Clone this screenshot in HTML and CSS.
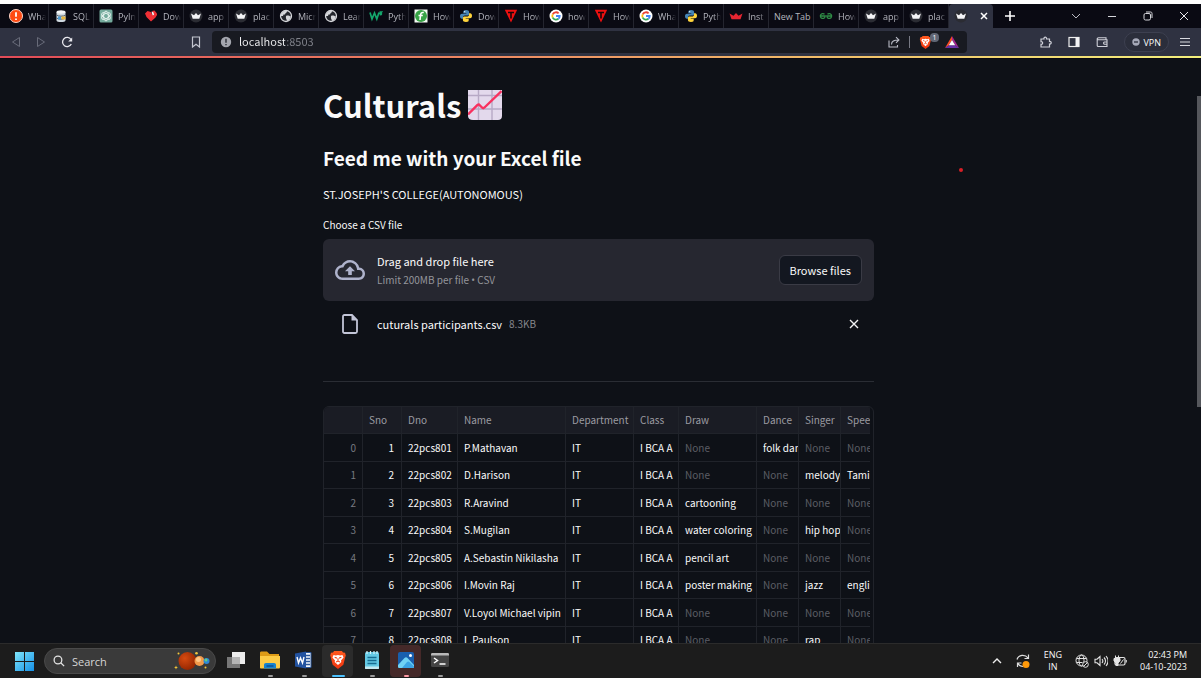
FILE: index.html
```
<!DOCTYPE html>
<html lang="en">
<head>
<meta charset="utf-8">
<title>Culturals</title>
<link rel="stylesheet" href="styles.css">
</head>
<body>
<svg class="defs" aria-hidden="true">
  <defs>
    <linearGradient id="gw" x1="0" y1="0" x2="1" y2="1"><stop offset="0" stop-color="#7fe6fb"/><stop offset="1" stop-color="#1590e6"/></linearGradient>
    <linearGradient id="gb" x1="0" y1="0" x2="0" y2="1"><stop offset="0" stop-color="#ff5a1f"/><stop offset="1" stop-color="#f0340f"/></linearGradient>
    <radialGradient id="gm" cx=".35" cy=".35" r=".75"><stop offset="0" stop-color="#d64a10"/><stop offset="1" stop-color="#8e2300"/></radialGradient>
  </defs>
  <symbol id="alert" viewBox="0 0 14 14"><circle cx="7" cy="7" r="6.5" fill="#ff4a12" stroke="#ffd9cc"/><path d="M7 3.2v4.6M7 9.4v1.6" stroke="#fff" stroke-width="1.8"/></symbol>
  <symbol id="sql" viewBox="0 0 14 14"><path d="M2.500 3v8.500c0 2 9 2 9 0V3z" fill="#cfd8df"/><ellipse cx="7" cy="3" rx="4.500" ry="1.700" fill="#f3f5f6"/><path d="M2.500 6c2 1.600 7 1.600 9 0M2.500 9c2 1.600 7 1.600 9 0" stroke="#555f6b" fill="none"/><path d="M7.500 7.500h4v3h-4z" fill="#e9b63c"/><path d="M4 7.500h3v3H4z" fill="#4c9bd6"/></symbol>
  <symbol id="gpt" viewBox="0 0 14 14"><rect x=".5" y=".5" width="13" height="13" rx="1.500" fill="#74aa9c"/><g fill="none" stroke="#e8f4f0" stroke-width=".9"><ellipse cx="7" cy="7" rx="2.400" ry="4.800"/><ellipse cx="7" cy="7" rx="2.400" ry="4.800" transform="rotate(60 7 7)"/><ellipse cx="7" cy="7" rx="2.400" ry="4.800" transform="rotate(120 7 7)"/></g></symbol>
  <symbol id="heart" viewBox="0 0 14 14"><path d="M1 4.500 3.500 2 7 3l1.500 3h4.500L11.500 8.500 7 12.500 2.500 8z" fill="#ef2f35"/><path d="M8 2l2.500-.5L13 4.500V6H9.500z" fill="#ef2f35"/><path d="M7.500 2.500l2 1 .5 2.500-1.500.3z" fill="#fff"/></symbol>
  <symbol id="crown" viewBox="0 0 14 14"><circle cx="7" cy="7" r="6.500" fill="#2b2c33"/><path d="M2 4.500l3 1.700L7 4l2 2.200 3-1.700-1.700 5.200H3.700z" fill="#f4f4f6"/></symbol>
  <symbol id="globe" viewBox="0 0 14 14"><circle cx="7" cy="7" r="5.500" fill="#24262d" stroke="#d5d6da" stroke-width="1.300"/><path d="M2 5c2-3 4-3.500 6-3 0 2-2 2-2 3.500H4.500L4 7H2zM7 7c2-1 3 0 5 .5-1 3-2.500 4.500-4 4.500 0-1.500-1.500-2-1-5z" fill="#d5d6da"/></symbol>
  <symbol id="w3" viewBox="0 0 14 14"><path d="M1 3.500l2 6.500L5.500 4l2.300 6L10 3.500M10.500 3h2l-1 1.200c1.400 0 1.200 1.800-.8 1.300" fill="none" stroke="#14a66c" stroke-width="1.700"/></symbol>
  <symbol id="fgreen" viewBox="0 0 14 14"><path d="M.5.500h13v13H.5z" fill="#f4fbf4"/><circle cx="7" cy="7" r="6" fill="#38a447"/><path d="M9.800 3.600C7.500 3 6.700 4.500 6.500 6.500L6 11M4.500 6.500h4.300" fill="none" stroke="#fff" stroke-width="1.600"/></symbol>
  <symbol id="python" viewBox="0 0 14 14"><path d="M7 1C4.500 1 4.300 2 4.300 3v1.200h3v.6H3C1.500 4.800 1 6 1 7.300c0 1.500.7 2.400 1.800 2.400H4V8.300c0-1 .8-1.800 1.900-1.800h2.800c.8 0 1.400-.7 1.400-1.500V3c0-1.200-1-2-3.100-2z" fill="#4584b6"/><path d="M7 13c2.500 0 2.700-1 2.700-2V9.800h-3v-.6H11c1.500 0 2-1.200 2-2.500 0-1.500-.7-2.400-1.800-2.400H10v1.400c0 1-.8 1.800-1.900 1.800H5.300c-.8 0-1.400.7-1.400 1.500v2c0 1.200 1 2 3.100 2z" fill="#ffd43b"/><circle cx="5.700" cy="2.700" r=".6" fill="#fff"/></symbol>
  <symbol id="tri" viewBox="0 0 14 14"><path d="M.8.8h12.400L7 13.500z" fill="#ed1010"/><path d="M4 3.500h6M7 3.500v6" stroke="#180609" stroke-width="1.600"/></symbol>
  <symbol id="google" viewBox="0 0 14 14"><circle cx="7" cy="7" r="6.500" fill="#fff"/><g fill="none" stroke-width="1.800"><path d="M9.600 4.300A3.700 3.700 0 0 0 3.700 5.300" stroke="#ea4335"/><path d="M3.700 5.300a3.700 3.700 0 0 0 0 3.400" stroke="#fbbc05"/><path d="M3.700 8.700a3.700 3.700 0 0 0 5.700 1.100" stroke="#34a853"/><path d="M9.400 9.800A3.700 3.700 0 0 0 10.700 7H7" stroke="#4285f4"/></g></symbol>
  <symbol id="redcrown" viewBox="0 0 14 14"><path d="M.5 4.500l4 2.200L7 4l2.500 2.700 4-2.200-2 5.700h-9z" fill="#e52531"/></symbol>
  <symbol id="gfg" viewBox="0 0 14 14"><path d="M5.500 5.300A2.400 2.400 0 1 0 6.200 7H1M8.500 5.300A2.400 2.400 0 1 1 7.800 7H13" fill="none" stroke="#2f8d46" stroke-width="1.300"/></symbol>
  <symbol id="shield" viewBox="0 0 16 18"><path d="M4.500 1h7l1 1.200 1.800.2L15 5l-.5 1.500-1.700 6.700L8 17l-4.800-3.800L1.500 6.500 1 5l.7-2.600 1.800-.2z" fill="url(#gb)"/><path d="M4 4.500l2 .4 2-.4 2 .4 2-.4L13 6.800 10.700 9.500l.3 1.200-3 2.800-3-2.800.3-1.200L3 6.800z" fill="#fff"/><path d="M5 6.500l2 .8M11 6.500l-2 .8M8 7.500v2M6.300 10.800 8 10l1.700.8" fill="none" stroke="#f2461a"/></symbol>
</svg>

<div class="window">
  <header class="chrome">
    <nav class="tabs" aria-label="Open tabs">
      <a class="tab" href="#"><svg class="fav"><use href="#alert"/></svg><span class="tab-text">Wha</span></a>
      <a class="tab" href="#"><svg class="fav"><use href="#sql"/></svg><span class="tab-text">SQL</span></a>
      <a class="tab" href="#"><svg class="fav"><use href="#gpt"/></svg><span class="tab-text">PyIn</span></a>
      <a class="tab" href="#"><svg class="fav"><use href="#heart"/></svg><span class="tab-text">Dow</span></a>
      <a class="tab" href="#"><svg class="fav"><use href="#crown"/></svg><span class="tab-text">app</span></a>
      <a class="tab" href="#"><svg class="fav"><use href="#crown"/></svg><span class="tab-text">plac</span></a>
      <a class="tab" href="#"><svg class="fav"><use href="#globe"/></svg><span class="tab-text">Micr</span></a>
      <a class="tab" href="#"><svg class="fav"><use href="#globe"/></svg><span class="tab-text">Lear</span></a>
      <a class="tab" href="#"><svg class="fav"><use href="#w3"/></svg><span class="tab-text">Pyth</span></a>
      <a class="tab" href="#"><svg class="fav"><use href="#fgreen"/></svg><span class="tab-text">How</span></a>
      <a class="tab" href="#"><svg class="fav"><use href="#python"/></svg><span class="tab-text">Dow</span></a>
      <a class="tab" href="#"><svg class="fav"><use href="#tri"/></svg><span class="tab-text">How</span></a>
      <a class="tab" href="#"><svg class="fav"><use href="#google"/></svg><span class="tab-text">how</span></a>
      <a class="tab" href="#"><svg class="fav"><use href="#tri"/></svg><span class="tab-text">How</span></a>
      <a class="tab" href="#"><svg class="fav"><use href="#google"/></svg><span class="tab-text">Wha</span></a>
      <a class="tab" href="#"><svg class="fav"><use href="#python"/></svg><span class="tab-text">Pyth</span></a>
      <a class="tab" href="#"><svg class="fav"><use href="#redcrown"/></svg><span class="tab-text">Inst</span></a>
      <a class="tab" href="#"><span class="tab-text tab-wide">New Tab</span></a>
      <a class="tab" href="#"><svg class="fav"><use href="#gfg"/></svg><span class="tab-text">How</span></a>
      <a class="tab" href="#"><svg class="fav"><use href="#crown"/></svg><span class="tab-text">app</span></a>
      <a class="tab" href="#"><svg class="fav"><use href="#crown"/></svg><span class="tab-text">plac</span></a>
      <div class="tab tab-active"><svg class="fav"><use href="#crown"/></svg><button class="icon-btn" aria-label="Close tab"><svg width="8" height="8" viewBox="0 0 8 8"><path d="M1 1l6 6M7 1L1 7" stroke="#fff" stroke-width="1.500"/></svg></button></div>
      <button class="icon-btn new-tab" aria-label="New tab"><svg width="10" height="10" viewBox="0 0 10 10"><path d="M5 0v10M0 5h10" stroke="#fff" stroke-width="1.600"/></svg></button>
      <div class="win-buttons">
        <button class="icon-btn" aria-label="Search tabs"><svg width="10" height="10" viewBox="0 0 10 10"><path d="M1 3l4 4 4-4" fill="none" stroke="#b9bac2"/></svg></button>
        <button class="icon-btn" aria-label="Minimize"><svg width="10" height="10" viewBox="0 0 10 10"><path d="M1 5.500h8" stroke="#d5d6db"/></svg></button>
        <button class="icon-btn" aria-label="Restore"><svg width="10" height="10" viewBox="0 0 10 10"><rect x="1" y="2.500" width="6.500" height="6.500" rx="1.500" fill="none" stroke="#d5d6db"/><path d="M3 1h4.500C8.500 1 9 1.500 9 2.500V7" fill="none" stroke="#d5d6db"/></svg></button>
        <button class="icon-btn" aria-label="Close"><svg width="10" height="10" viewBox="0 0 10 10"><path d="M1 1l8 8M9 1L1 9" stroke="#e6e6ea"/></svg></button>
      </div>
    </nav>
    <div class="toolbar">
      <div class="nav-buttons">
        <button class="icon-btn" aria-label="Back"><svg width="10" height="12" viewBox="0 0 10 12"><path d="M8.500 1.500v9L1.500 6z" fill="none" stroke="#686b79"/></svg></button>
        <button class="icon-btn" aria-label="Forward"><svg width="10" height="12" viewBox="0 0 10 12"><path d="M1.500 1.500v9L8.500 6z" fill="none" stroke="#686b79"/></svg></button>
        <button class="icon-btn" aria-label="Reload"><svg width="12" height="12" viewBox="0 0 12 12"><path d="M10.300 8A4.600 4.600 0 1 1 10 3.500" fill="none" stroke="#e9e9ee" stroke-width="1.300"/><path d="M11.200 1.500v4H7.200z" fill="#e9e9ee"/></svg></button>
      </div>
      <button class="icon-btn bookmark" aria-label="Bookmark"><svg width="10" height="12" viewBox="0 0 10 12"><path d="M1.500 1h7v10L5 8.200 1.500 11z" fill="none" stroke="#c4c6d0" stroke-width="1.200"/></svg></button>
      <div class="address">
        <svg width="12" height="12" viewBox="0 0 12 12"><circle cx="6" cy="6" r="5.200" fill="#a4a6ae"/><path d="M6 2.800v4M6 8v1.300" stroke="#2a2d35" stroke-width="1.400"/></svg>
        <input class="url" type="text" aria-label="Address" value="localhost:8503">
        <button class="icon-btn" aria-label="Share"><svg width="12" height="12" viewBox="0 0 12 12"><path d="M1 4.500V11h8.500V9M3.500 8.500C3.500 5 6 4 10.500 4M8 1.200 10.900 4 8 6.800" fill="none" stroke="#b9bbc5" stroke-width="1.100"/></svg></button>
        <span class="divider"></span>
        <button class="icon-btn shield-btn" aria-label="Brave Shields"><svg width="13" height="15"><use href="#shield"/></svg><span class="badge">1</span></button>
        <button class="icon-btn" aria-label="Rewards"><svg width="14" height="12" viewBox="0 0 14 12"><path d="M7 0v4L3.800 9.300 0 12z" fill="#ff4b24"/><path d="M7 0l7 12-3.800-2.700L7 4z" fill="#a3278f"/><path d="M0 12l3.800-2.700h6.400L14 12z" fill="#6a32a8"/><path d="M7 4l3.200 5.300H3.800z" fill="#fff"/></svg></button>
      </div>
      <div class="tools">
        <button class="icon-btn" aria-label="Extensions"><svg width="12" height="12" viewBox="0 0 12 12"><path d="M1 3h3c-.6-2.400 3-2.400 2.500 0H9.500v2.500c2.300-.5 2.300 3 0 2.500v3H1V8.300c2.200.4 2.200-3 0-2.600z" fill="none" stroke="#cfd0d8" stroke-width="1.200"/></svg></button>
        <button class="icon-btn" aria-label="Sidebar"><svg width="12" height="12" viewBox="0 0 12 12"><rect x="1" y="1.500" width="10" height="9" fill="none" stroke="#eee" stroke-width="1.200"/><path d="M7.500 1.500H11v9H7.500z" fill="#f3f3f5"/></svg></button>
        <button class="icon-btn" aria-label="Wallet"><svg width="12" height="12" viewBox="0 0 12 12"><path d="M10 3.500V1.800H2.500C.8 1.800.8 3.800 2.500 3.800H11v6.700H2.200c-.7 0-1-.4-1-1V2.800M11 6H8.300c-1 0-1 2.200 0 2.200H11" fill="none" stroke="#cfd0d8" stroke-width="1.100"/></svg></button>
        <button class="vpn"><svg width="8" height="8" viewBox="0 0 8 8"><circle cx="4" cy="4" r="3.700" fill="#a6a9b8"/><path d="M2 4h4" stroke="#2b2e3b" stroke-width="1.300"/></svg>VPN</button>
        <button class="icon-btn" aria-label="Menu"><svg width="12" height="10" viewBox="0 0 12 10"><path d="M1 1.500h10M1 5h10M1 8.500h10" stroke="#d9dae0"/></svg></button>
      </div>
    </div>
    <div class="accent"></div>
  </header>

  <main class="page">
    <div class="content">
      <h1 class="title">Culturals
        <svg class="chart" viewBox="0 0 34 30"><path d="M0 0h34v26c0 2.500-1.500 4-4 4H5c-3 0-5-1.500-5-4z" fill="#e3d9ec"/><path d="M0 5.500h34M0 19h34M10.500 0v30M24 0v30" stroke="#b7a9c5" stroke-width="1.400"/><path d="M0 24.500 9.500 15c1-.8 1.700-.5 2.500.5l2 2c.8.800 1.700.800 2.500 0L33.500 1" fill="none" stroke="#f8315f" stroke-width="2.400"/></svg>
      </h1>
      <h2 class="subtitle">Feed me with your Excel file</h2>
      <p class="college">ST.JOSEPH'S COLLEGE(AUTONOMOUS)</p>
      <label class="upload-label" for="csv">Choose a CSV file</label>
      <div class="dropzone">
        <svg class="cloud" viewBox="0 0 24 24"><path d="M19.350 10.040A7.490 7.490 0 0 0 12 4C9.110 4 6.600 5.640 5.350 8.040A5.994 5.994 0 0 0 0 14c0 3.310 2.690 6 6 6h13c2.760 0 5-2.240 5-5 0-2.640-2.050-4.780-4.650-4.960zM19 18H6c-2.210 0-4-1.790-4-4 0-2.050 1.530-3.760 3.560-3.970l1.070-.11.5-.95A5.469 5.469 0 0 1 12 6c2.620 0 4.880 1.860 5.390 4.430l.3 1.500 1.530.11A2.980 2.980 0 0 1 22 15c0 1.650-1.350 3-3 3zM8 13h2.550v3h2.900v-3H16l-4-4z" fill="#aeb2cb"/></svg>
        <div class="drop-text">
          <span class="drop-main">Drag and drop file here</span>
          <span class="drop-note">Limit 200MB per file <span class="dot">•</span> CSV</span>
        </div>
        <input class="file-input" id="csv" type="file" accept=".csv">
        <button class="browse" type="button">Browse files</button>
      </div>
      <div class="file-row">
        <svg class="doc" viewBox="0 0 16 20"><path d="M2.500 1H10l5 5v11.500c0 1-.5 1.500-1.500 1.500h-11C1.500 19 1 18.500 1 17.500v-15C1 1.500 1.500 1 2.500 1z" fill="none" stroke="#c3c6d8" stroke-width="1.800"/><path d="M9.500 1v5.500H15z" fill="#c3c6d8"/></svg>
        <span class="file-name">cuturals participants.csv</span>
        <span class="file-size">8.3KB</span>
        <button class="icon-btn remove" aria-label="Remove file"><svg width="10" height="10" viewBox="0 0 10 10"><path d="M1 1l8 8M9 1L1 9" stroke="#f3f3f5" stroke-width="1.400"/></svg></button>
      </div>
      <hr class="rule">
      <div class="frame">
        <table class="grid">
          <colgroup><col class="c-idx"><col class="c-sno"><col class="c-dno"><col class="c-name"><col class="c-dep"><col class="c-class"><col class="c-draw"><col class="c-dance"><col class="c-dance"><col class="c-last"></colgroup>
          <thead><tr><th></th><th>Sno</th><th>Dno</th><th>Name</th><th>Department</th><th>Class</th><th>Draw</th><th>Dance</th><th>Singer</th><th>Speech</th></tr></thead>
          <tbody>
            <tr><td class="idx">0</td><td class="num">1</td><td>22pcs801</td><td>P.Mathavan</td><td>IT</td><td>I BCA A</td><td class="none">None</td><td>folk dance</td><td class="none">None</td><td class="none">None</td></tr>
            <tr><td class="idx">1</td><td class="num">2</td><td>22pcs802</td><td>D.Harison</td><td>IT</td><td>I BCA A</td><td class="none">None</td><td class="none">None</td><td>melody</td><td>Tamil</td></tr>
            <tr><td class="idx">2</td><td class="num">3</td><td>22pcs803</td><td>R.Aravind</td><td>IT</td><td>I BCA A</td><td>cartooning</td><td class="none">None</td><td class="none">None</td><td class="none">None</td></tr>
            <tr><td class="idx">3</td><td class="num">4</td><td>22pcs804</td><td>S.Mugilan</td><td>IT</td><td>I BCA A</td><td>water coloring</td><td class="none">None</td><td>hip hop</td><td class="none">None</td></tr>
            <tr><td class="idx">4</td><td class="num">5</td><td>22pcs805</td><td>A.Sebastin Nikilasha</td><td>IT</td><td>I BCA A</td><td>pencil art</td><td class="none">None</td><td class="none">None</td><td class="none">None</td></tr>
            <tr><td class="idx">5</td><td class="num">6</td><td>22pcs806</td><td>I.Movin Raj</td><td>IT</td><td>I BCA A</td><td>poster making</td><td class="none">None</td><td>jazz</td><td>english</td></tr>
            <tr><td class="idx">6</td><td class="num">7</td><td>22pcs807</td><td>V.Loyol Michael vipin</td><td>IT</td><td>I BCA A</td><td class="none">None</td><td class="none">None</td><td class="none">None</td><td class="none">None</td></tr>
            <tr><td class="idx">7</td><td class="num">8</td><td>22pcs808</td><td>L.Paulson</td><td>IT</td><td>I BCA A</td><td class="none">None</td><td class="none">None</td><td>rap</td><td class="none">None</td></tr>
          </tbody>
        </table>
      </div>
    </div>
    <span class="pointer"></span>
    <span class="scroll-thumb"></span>
  </main>

  <footer class="taskbar">
    <button class="icon-btn start" aria-label="Start"><svg width="19" height="19" viewBox="0 0 19 19"><path d="M0 0h9v9H0zM10 0h9v9h-9zM0 10h9v9H0zM10 10h9v9h-9z" fill="url(#gw)"/></svg></button>
    <div class="search">
      <svg width="12" height="12" viewBox="0 0 14 14"><circle cx="5.800" cy="5.800" r="4.500" fill="none" stroke="#e4e4e4" stroke-width="1.500"/><path d="M9 9l4 4" stroke="#e4e4e4" stroke-width="1.500"/></svg>
      <input class="search-input" type="text" aria-label="Search" placeholder="Search">
      <svg width="36" height="20" viewBox="0 0 36 20"><circle cx="13.500" cy="10" r="9" fill="url(#gm)"/><circle cx="25.500" cy="10" r="5" fill="#f29b4b"/><circle cx="24.500" cy="8.500" r="2.500" fill="#ffc887"/><circle cx="32.500" cy="10" r="3" fill="#2d87d8"/><circle cx="32" cy="9" r="1.500" fill="#63cf80"/><g fill="#f5c83b"><path d="M2 14.500l.6 1.400 1.400.6-1.400.6L2 18.500l-.6-1.400L0 16.500l1.400-.6z"/><circle cx="4.500" cy="2.500" r="1"/><circle cx="22.500" cy="2.200" r="1.300"/><circle cx="31.500" cy="16.500" r="1"/></g></svg>
    </div>
    <nav class="apps" aria-label="Apps">
      <button class="app" aria-label="Task view"><svg width="20" height="20" viewBox="0 0 20 20"><path d="M1 7h13v11H1z" fill="#777"/><path d="M6 2h13v12H6z" fill="#ececec"/><path d="M6 7h8v7H6z" fill="#b5b5b5"/></svg></button>
      <button class="app running" aria-label="File Explorer"><svg width="20" height="20" viewBox="0 0 20 20"><path d="M0 3c0-1 .5-1.500 1.500-1.500H7L9.500 4H19v14H0z" fill="#dd9b16"/><path d="M0 6h20v11c0 .8-.3 1.500-1.200 1.500H1.200C.3 18.500 0 18 0 17z" fill="#fccb45"/><path d="M4 18.500V15c0-1.300.7-2 2-2h8c1.300 0 2 .7 2 2v3.500z" fill="#1683d0"/><path d="M6.500 16h7" stroke="#0b4f91" stroke-width="1.500"/></svg></button>
      <button class="app running" aria-label="Word"><svg width="20" height="20" viewBox="0 0 20 20"><path d="M9 2.500h8v15H9z" fill="#f2f6fb" stroke="#2b579a"/><path d="M10 5.500h6M10 8.500h6M10 11.500h6M10 14.500h6" stroke="#2b579a" stroke-width="1.300"/><path d="M1 3.500 12 1.500v17L1 16.500z" fill="#2353a0"/><path d="M3 7l1.500 6L6.500 8l2 5L10 7" fill="none" stroke="#fff" stroke-width="1.400"/></svg></button>
      <button class="app current" aria-label="Brave"><svg width="18" height="20"><use href="#shield"/></svg></button>
      <button class="app running" aria-label="Notepad"><svg width="20" height="20" viewBox="0 0 20 20"><rect x="3" y="2" width="14" height="17" rx="1.500" fill="#64c9e4"/><path d="M5 1v3M8.500 1v3M12 1v3M15 1v3" stroke="#d7f5fc" stroke-width="1.200"/><path d="M5.500 7.500h9M5.500 10.500h9M5.500 13.500h9" stroke="#176d91" stroke-width="1.400"/><path d="M3 16.500h14V18c0 .7-.3 1-1 1H4c-.7 0-1-.3-1-1z" fill="#c4e9f1"/></svg></button>
      <button class="app alerting" aria-label="Photos"><svg width="18" height="18" viewBox="0 0 18 18"><rect x="1" y="1" width="16" height="16" rx="2" fill="#195fae"/><path d="M1 14l6.500-7c1-1 2-1 3 0L17 14v1.500c0 1-.5 1.500-1.500 1.500h-13C1.500 17 1 16.500 1 15.500z" fill="#70d2f5"/><path d="M5 17l5-6c.8-.8 1.600-.8 2.400 0L17 15.500c0 1-.5 1.500-1.500 1.500z" fill="#3ba4e5"/><circle cx="13.500" cy="4.500" r="1.500" fill="#fff"/></svg></button>
      <button class="app running" aria-label="Terminal"><svg width="20" height="20" viewBox="0 0 20 20"><rect x="1" y="3" width="18" height="14" rx="1.500" fill="#454545"/><path d="M1 5.500V4.500C1 3.500 1.500 3 2.500 3h15c1 0 1.500.5 1.500 1.500v1z" fill="#b9b9b9"/><path d="M4 8l3.500 2.500L4 13M9.500 14h6" fill="none" stroke="#fff" stroke-width="1.500"/></svg></button>
    </nav>
    <div class="tray">
      <button class="icon-btn" aria-label="Hidden icons"><svg width="10" height="8" viewBox="0 0 10 8"><path d="M1 6l4-4 4 4" fill="none" stroke="#eee" stroke-width="1.400"/></svg></button>
      <button class="icon-btn" aria-label="Updates"><svg width="16" height="16" viewBox="0 0 16 16"><path d="M2 6.500C3.500 1.500 10 1 13 5M13.500 1.500V5.500H9.500M8 13.500c-2 0-4-1-5-3M2.500 14v-4h4" fill="none" stroke="#ddd" stroke-width="1.200"/><circle cx="11" cy="11.500" r="3.500" fill="#ff9a0a"/></svg></button>
      <span class="lang"><span>ENG</span><span>IN</span></span>
      <span class="status">
        <svg width="14" height="14" viewBox="0 0 14 14"><g fill="none" stroke="#e4e4e4"><circle cx="6.500" cy="6.500" r="5.500"/><ellipse cx="6.500" cy="6.500" rx="2.500" ry="5.500"/><path d="M1.500 4.500h10M1.500 8.500h6"/></g><circle cx="10.500" cy="10.500" r="2.800" fill="#1c1c1c" stroke="#e4e4e4"/><path d="M8.700 12.300l3.600-3.600" stroke="#e4e4e4"/></svg>
        <svg width="14" height="14" viewBox="0 0 14 14"><path d="M1 5.200h2L6 2.500v9L3 8.800H1zM8 5c1 1.200 1 2.800 0 4M10 3.500c2 2 2 5 0 7M12 2c2.500 3 2.500 7 0 10" fill="none" stroke="#e4e4e4" stroke-width="1.100"/></svg>
        <svg width="14" height="14" viewBox="0 0 14 14"><rect x="2" y="3.500" width="10" height="7.500" rx="1.500" fill="none" stroke="#e4e4e4" stroke-width="1.200"/><path d="M13.300 6v2.500M2.500 1.500v3M5.500 1.500v3M1 4.500h6v2.300L5 9v2.500H3V9L1 6.800zM7.500 9.500l3-4" stroke="#e4e4e4" fill="#e4e4e4"/></svg>
      </span>
      <span class="clock"><span>02:43 PM</span><span>04-10-2023</span></span>
    </div>
  </footer>
</div>
</body>
</html>
```
FILE: styles.css
```
* { box-sizing: border-box; }
body {
  margin: 0;
  background: #0e1117;
  color: #fafafa;
  font-family: "Open Sans", "Noto Sans", sans-serif;
}
button { font: inherit; color: inherit; cursor: pointer; }
svg { display: block; flex: none; }
.defs { position: absolute; width: 0; height: 0; }
.icon-btn { display: flex; align-items: center; justify-content: center; padding: 0; border: 0; background: none; }

.window { display: flex; flex-direction: column; height: 100vh; overflow: hidden; }

/* Browser chrome */
.chrome { flex: none; border-top: 4px solid #fff; background: #0a0a13; }
.tabs { display: flex; height: 24px; padding-left: 4px; }
.tab {
  display: flex; align-items: center; flex: 0 0 45px; gap: 5px;
  padding-left: 5px; overflow: hidden;
  color: #b4b5bd; font-size: 9px; text-decoration: none;
  border-right: 1px solid #24252f;
}
.fav { width: 14px; height: 14px; }
.tab-text {
  flex: 1; overflow: hidden; white-space: nowrap; margin-right: 2px;
  -webkit-mask-image: linear-gradient(to right, #000 60%, transparent);
  mask-image: linear-gradient(to right, #000 60%, transparent);
}
.tab-wide { -webkit-mask-image: none; mask-image: none; margin-right: 0; }
.tab-active { flex-basis: 44px; background: #2f3241; border-radius: 4px 4px 0 0; border-right: 0; gap: 12px; }
.new-tab { width: 34px; }
.win-buttons { display: flex; gap: 26px; margin-left: auto; padding-right: 12px; }

.toolbar { display: flex; align-items: center; height: 28px; background: #2f3241; padding-right: 10px; }
.nav-buttons { display: flex; gap: 15px; padding-left: 11px; }
.bookmark { margin-left: 118px; }
.address {
  display: flex; align-items: center; gap: 9px; flex: 0 1 755px;
  height: 22px; margin-left: 11px; padding: 0 8px; border-radius: 4px; background: #181a21;
}
.url {
  flex: 1; min-width: 0; height: 16px; padding: 0 0 2px; border: 0; outline: 0; margin-left: -2px;
  font: 11px "Noto Sans CJK SC", sans-serif;
  color: transparent; background: linear-gradient(to right, #f2f2f4 46px, #82848c 46px);
  -webkit-background-clip: text; background-clip: text;
}
.divider { width: 1px; height: 12px; background: #777984; }
.shield-btn { position: relative; padding-right: 4px; }
.badge {
  position: absolute; top: -2px; right: -3px; width: 9px; height: 9px; border-radius: 4px;
  background: #606674; color: #fff; font-size: 7px; line-height: 9px; text-align: center;
}
.tools { display: flex; align-items: center; gap: 16px; margin-left: auto; }
.vpn {
  display: flex; align-items: center; gap: 3px; height: 20px; padding: 0 7px;
  border: 1px solid #3d4050; border-radius: 10px; background: #2b2e3b; font-size: 9px;
}
.tools .vpn { margin-right: -6px; }
.accent { height: 3px; background: linear-gradient(to right, #e24b57, #ee8862 40%, #f1c069 70%, #f3f07c); border-bottom: 1px solid #0a0a13; }

/* Page */
.page {
  position: relative; flex: 1; min-height: 0; overflow: hidden; padding-right: 4px;
  font-family: "Noto Sans CJK SC", "Open Sans", sans-serif;
}
.content { max-width: 551px; margin: 0 auto; }
.title { display: flex; align-items: center; gap: 7px; margin: 22px 0 0; font-size: 31px; line-height: 48px; font-weight: 700; }
.chart { width: 34px; height: 30px; }
.subtitle { margin: 15px 0 0; font-size: 19px; line-height: 28px; font-weight: 700; }
.college { margin: 12px 0 0; font-size: 11px; line-height: 20px; }
.upload-label { display: block; margin-top: 12px; font-size: 10px; line-height: 18px; }
.dropzone {
  display: flex; align-items: center; margin-top: 5px; padding: 12px;
  min-height: 62px; border-radius: 6px; background: #262730;
}
.cloud { width: 30px; height: 30px; }
.drop-text { display: flex; flex-direction: column; flex: 1; padding-left: 12px; }
.drop-main { font-size: 11px; line-height: 20px; }
.drop-note { font-size: 10px; line-height: 18px; color: #94959b; }
.dot { font-family: "Open Sans", sans-serif; }
.file-input { position: absolute; width: 1px; height: 1px; opacity: 0; pointer-events: none; }
.browse {
  height: 30px; padding: 0 10px 1px; border: 1px solid #3a3b45; border-radius: 6px;
  background: #131720; font-size: 11px; line-height: 20px;
}
.file-row { display: flex; align-items: center; height: 24px; margin-top: 11px; padding: 0 15px 0 19px; }
.doc { width: 16px; height: 20px; }
.file-name { padding-left: 19px; font-size: 11px; line-height: 20px; }
.file-size { padding-left: 7px; font-size: 10px; line-height: 20px; color: #85868c; }
.remove { margin-left: auto; }
.rule { margin: 45px 0 24px; border: 0; border-top: 1px solid #2a2d34; }

.frame { padding-right: 3px; overflow: hidden; border: 1px solid #20232a; border-radius: 6px; }
.grid { width: 100%; table-layout: fixed; border-collapse: separate; border-spacing: 0; font-size: 10px; line-height: 16px; }
.c-idx { width: 39px; }
.c-sno { width: 39px; }
.c-dno { width: 56px; }
.c-name { width: 108px; }
.c-dep { width: 68px; }
.c-class { width: 45px; }
.c-draw { width: 78px; }
.c-dance { width: 42px; }
.grid th, .grid td {
  height: 27px; padding: 0 0 0 6px; overflow: hidden; white-space: nowrap; text-align: left;
  border-right: 1px solid #20232a; border-bottom: 1px solid #20232a;
}
.grid tbody tr:nth-child(odd) td { height: 28px; }
.grid th { background: #1a1c24; color: #9a9ba1; font-weight: 400; }
.grid th:last-child, .grid td:last-child { border-right: 0; }
.grid td { font-weight: 400; }
.grid td.idx { padding-right: 6px; text-align: right; color: #777980; }
.grid td.num { padding-right: 7px; text-align: right; }
.grid td.none { color: #5c5e65; }

.pointer { position: absolute; top: 109px; left: 80%; width: 4px; height: 4px; margin-left: -2px; border-radius: 50%; background: #d81f26; }
.scroll-thumb { position: absolute; top: 37px; right: 0; width: 4px; height: 311px; background: #55575c; }

/* Taskbar */
.taskbar {
  display: flex; align-items: center; flex: none; height: 35px; padding: 0 14px 0 15px;
  border-top: 1px solid #2b2b2b; background: #1c1c1c;
}
.search {
  display: flex; align-items: center; width: 172px; height: 26px; margin-left: 10px;
  padding: 0 5px 0 8px; gap: 7px; border: 1px solid #4a4a4a; border-radius: 13px; background: #3a3a3a;
}
.search-input { flex: 1; min-width: 0; padding: 0; border: 0; outline: 0; background: none; font: 11px "Open Sans", sans-serif; color: #ddd; }
.search-input::placeholder { color: #d6d6d6; opacity: 1; }
.apps { display: flex; gap: 3px; margin-left: 4px; }
.app {
  position: relative; display: flex; align-items: center; justify-content: center;
  width: 31px; height: 32px; padding: 0 0 2px; border: 0; border-radius: 4px; background: none;
}
.app.running::after, .app.current::after, .app.alerting::after {
  content: ""; position: absolute; bottom: 0; left: 50%; width: 5px; height: 2px;
  margin-left: -2px; border-radius: 1px; background: #9a9a9a;
}
.app.current { background: #2b2b2b; }
.app.current::after { width: 13px; margin-left: -6px; background: #4cc2ff; }
.app.alerting { background: #452929; }
.app.alerting::after { background: #ff99a4; }
.tray { display: flex; align-items: center; gap: 13px; margin-left: auto; font-size: 9px; line-height: 12px; }
.lang { display: flex; flex-direction: column; text-align: center; }
.status { display: flex; align-items: center; gap: 5px; }
.clock { display: flex; flex-direction: column; text-align: right; }
```
